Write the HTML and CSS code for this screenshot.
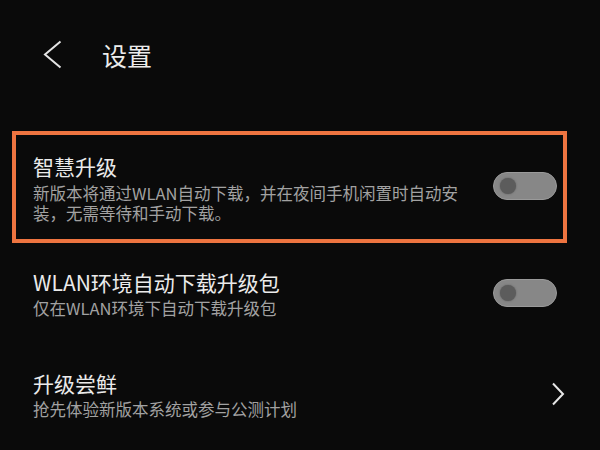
FILE: index.html
```html
<!DOCTYPE html>
<html lang="zh-CN">
<head>
<meta charset="utf-8">
<link rel="stylesheet" href="styles.css">
</head>
<body>
<div class="page">
  <header class="header">
    <svg class="back" width="20" height="30" viewBox="0 0 20 30">
      <polyline points="17.5,1.5 2,14.5 17.5,27.5" fill="none" stroke="#e4e4e4" stroke-width="2"/>
    </svg>
    <h1 class="title">设置</h1>
  </header>

  <section class="highlight">
    <div class="row row-boxed">
      <div class="text text-wide">
        <div class="item-title">智慧升级</div>
        <div class="item-sub">新版本将通过WLAN自动下载，并在夜间手机闲置时自动安装，无需等待和手动下载。</div>
      </div>
      <div class="toggle"><span class="knob"></span></div>
    </div>
  </section>

  <div class="row row-plain row-second">
    <div class="text">
      <div class="item-title">WLAN环境自动下载升级包</div>
      <div class="item-sub">仅在WLAN环境下自动下载升级包</div>
    </div>
    <div class="toggle"><span class="knob"></span></div>
  </div>

  <div class="row row-plain row-third">
    <div class="text">
      <div class="item-title">升级尝鲜</div>
      <div class="item-sub">抢先体验新版本系统或参与公测计划</div>
    </div>
    <svg class="chev" width="14" height="24" viewBox="0 0 14 24">
      <polyline points="2,1.5 12,12 2,22.5" fill="none" stroke="#e6e6e6" stroke-width="2"/>
    </svg>
  </div>
</div>
</body>
</html>
```

FILE: styles.css
```css
* { box-sizing: border-box; margin: 0; padding: 0; }

html, body {
  background: #0a0a0a;
}

body {
  width: 600px;
  height: 450px;
  overflow: hidden;
  font-family: "Noto Sans CJK SC", "Noto Sans", sans-serif;
  color: #e8e8e8;
}

.page {
  width: 600px;
  height: 450px;
}

.header {
  height: 110px;
  display: flex;
  align-items: center;
  padding-left: 43px;
}

.back {
  display: block;
  margin-top: -1px;
}

.title {
  font-size: 25px;
  font-weight: 400;
  line-height: 32px;
  margin-left: 39px;
  color: #ececec;
}

.highlight {
  margin: 21px 33px 0 12px;
  border: 4px solid #ee7440;
  height: 112px;
}

.row {
  display: flex;
  align-items: center;
  justify-content: space-between;
}

.row-boxed {
  height: 104px;
  padding: 0 6px 0 17px;
}

.row-plain {
  padding: 0 43px 0 33px;
}

.row-second {
  margin-top: 25px;
  height: 50px;
}

.row-third {
  margin-top: 50px;
  height: 52px;
}

.text-wide {
  width: 430px;
}

.item-title {
  font-size: 21px;
  line-height: 28px;
  color: #ebebeb;
}

.item-sub {
  font-size: 16.5px;
  line-height: 20px;
  color: #a2a2a2;
  margin-top: 2px;
}

.row-boxed .item-sub {
  margin-top: 3px;
}

.toggle {
  width: 64px;
  height: 28px;
  border-radius: 14px;
  background: #878787;
  border: 1px solid #9a9a9a;
  display: flex;
  align-items: center;
  padding-left: 6px;
  flex: none;
}

.row-boxed .toggle {
  margin-top: -3px;
}

.knob {
  width: 16px;
  height: 16px;
  border-radius: 50%;
  background: #5c5c5c;
  box-shadow: 0 0 2px #5c5c5c;
}

.chev {
  display: block;
  margin-right: -8px;
}
```
